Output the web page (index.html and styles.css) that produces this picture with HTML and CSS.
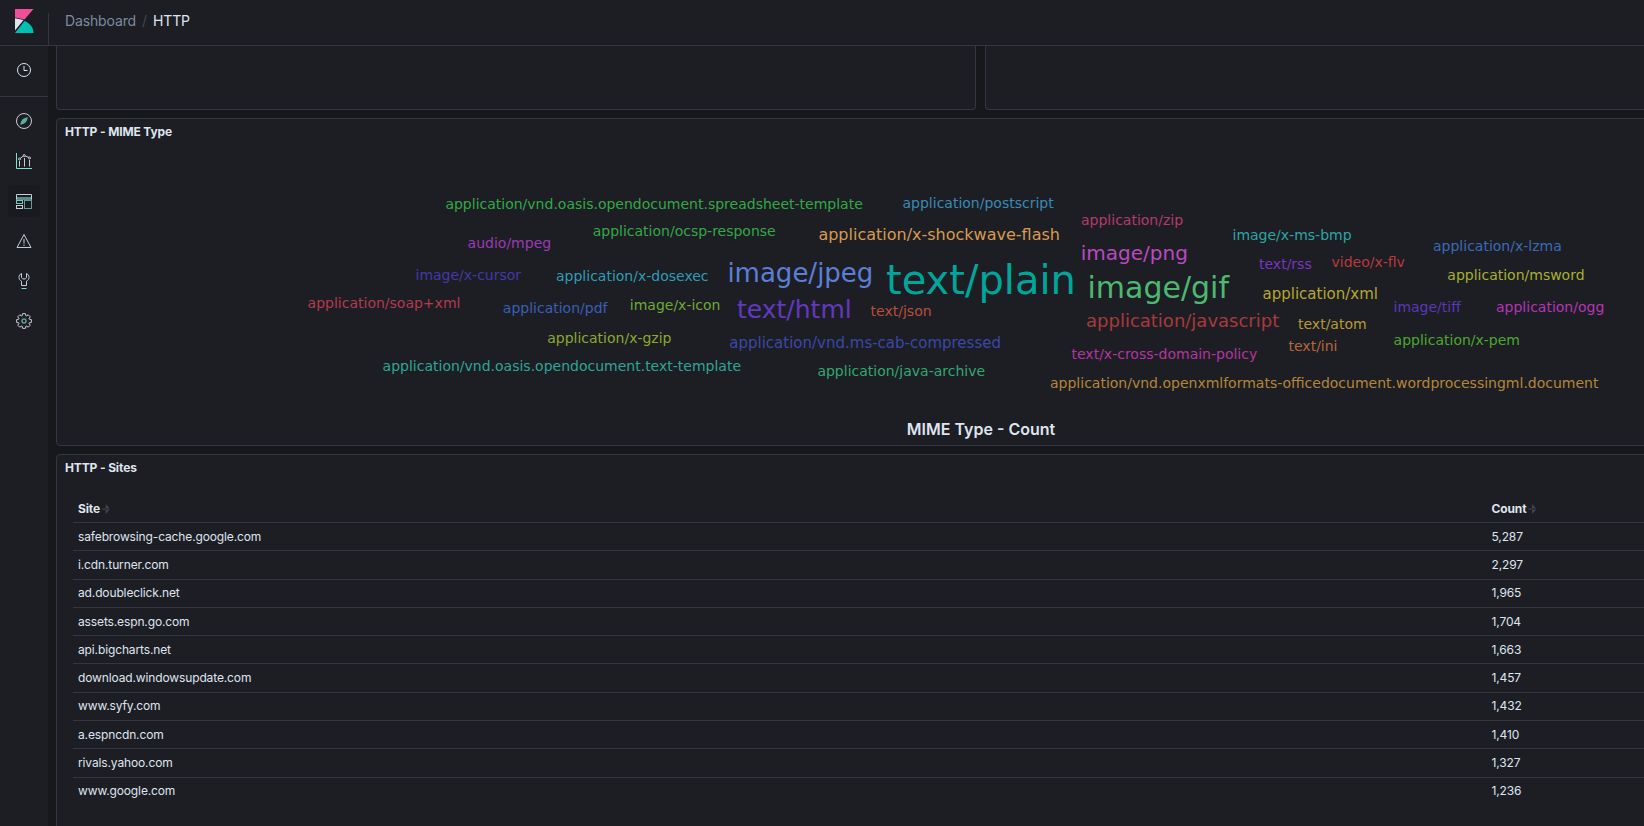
FILE: index.html
```html
<!DOCTYPE html>
<html lang="en">
<head>
    <meta charset="UTF-8">
    <meta name="viewport" content="width=device-width, initial-scale=1.0">
    <title>HTTP - Dashboard</title>
    <link rel="stylesheet" href="styles.css">
</head>
<body>
    <header class="top-bar">
        <div class="logo-box">
            <svg width="20" height="24" viewBox="0 0 20 24">
                <polygon points="0,0 18.500,0 9.500,10.500 0,8.500" fill="#f04e98"/>
                <polygon points="0,9.200 8.500,11 0,21.500" fill="#dfe5ef"/>
                <path d="M0 24 L9.500 12 C14.800 14 18.500 18.500 18.500 24 Z" fill="#00bfb3"/>
            </svg>
        </div>
        <nav class="crumbs">
            <span class="crumb">Dashboard</span>
            <span class="crumb-sep">/</span>
            <span class="crumb-last">HTTP</span>
        </nav>
    </header>

    <div class="layout">
        <aside class="side-nav">
            <div class="nav-group">
                <div class="nav-item">
                    <svg width="16" height="16" viewBox="0 0 16 16" fill="none" stroke="#dfe5ef">
                        <circle cx="8" cy="8" r="6.500"/>
                        <path d="M8 4v4.500h3.500"/>
                    </svg>
                </div>
            </div>
            <div class="nav-group nav-group-main">
                <div class="nav-item">
                    <svg width="16" height="16" viewBox="0 0 16 16" fill="none" stroke="#c9ced6">
                        <circle cx="8" cy="8" r="7.500"/>
                        <path d="M11.800 4.200C11.500 6.500 10.500 8.600 9.200 9.800 8 10.800 6 11.500 4.200 11.800 4.500 9.500 5.500 7.400 6.800 6.200 8 5.200 10 4.500 11.800 4.200Z" fill="#54b399" stroke="none"/>
                    </svg>
                </div>
                <div class="nav-item">
                    <svg width="16" height="16" viewBox="0 0 16 16" fill="none" stroke="#c9ced6">
                        <path d="M.5 0v15.500H16" stroke="#7de2d1"/>
                        <path d="M3.500 8v5.500M8.500 5v8.500M13.500 7v6.500"/>
                        <path d="M3.500 6 8 2.500l5 2"/>
                        <circle cx="3.500" cy="6" r="1" fill="#1d1e24"/>
                        <circle cx="8.200" cy="2.500" r="1" fill="#1d1e24"/>
                        <circle cx="13.500" cy="5" r="1" fill="#1d1e24"/>
                    </svg>
                </div>
                <div class="nav-item nav-item-active">
                    <svg width="16" height="17" viewBox="0 0 16 17" fill="none" stroke="#c9ced6">
                        <rect x="0" y="4" width="16" height="3" fill="#5b8a85" stroke="none"/>
                        <path d="M.5 6.500V1.500h15v5"/>
                        <rect x=".5" y="12.500" width="6" height="3"/>
                        <rect x=".5" y="7.500" width="6" height="3" stroke="#6fc9ba"/>
                        <rect x="8.500" y="7.500" width="7" height="8" stroke="#5f9e94"/>
                    </svg>
                </div>
                <div class="nav-item">
                    <svg width="16" height="16" viewBox="0 0 16 16" fill="none" stroke="#c9ced6">
                        <path d="M8 1.500 15 14.500H1Z"/>
                        <path d="M8 6v4.500M8 11.500v1.500"/>
                    </svg>
                </div>
                <div class="nav-item">
                    <svg width="16" height="16" viewBox="0 0 16 16" fill="none" stroke="#c9ced6">
                        <path d="M5.500.5C3.800 1.200 3 2.800 3 4.300c0 1.800 1 3.200 2.500 3.900v4.300h5V8.200C12 7.500 13 6.100 13 4.300c0-1.500-.8-3.100-2.500-3.800v4c0 .8-1 1.500-2.500 1.500s-2.500-.7-2.500-1.500Z"/>
                        <path d="M5.500 15.500h5" stroke="#7de2d1"/>
                    </svg>
                </div>
                <div class="nav-item">
                    <svg width="16" height="16" viewBox="0 0 16 16" fill="none" stroke="#c9ced6">
                        <polygon points="13.170,6.120 15.360,6.570 15.360,9.430 13.170,9.880 12.980,10.320 14.220,12.190 12.190,14.220 10.320,12.980 9.880,13.170 9.430,15.360 6.570,15.360 6.120,13.170 5.680,12.980 3.810,14.220 1.780,12.190 3.020,10.320 2.830,9.880 .64,9.430 .64,6.570 2.830,6.120 3.020,5.680 1.780,3.810 3.810,1.780 5.680,3.020 6.120,2.830 6.570,.64 9.430,.64 9.880,2.830 10.320,3.020 12.190,1.780 14.220,3.810 12.980,5.680"/>
                        <circle cx="8" cy="8" r="2" stroke="#5f9e94" stroke-width="1.500"/>
                    </svg>
                </div>
            </div>
        </aside>

        <main class="dashboard">
            <div class="panel-row">
                <section class="panel panel-cut"></section>
                <section class="panel panel-cut"></section>
            </div>

            <section class="panel panel-mime">
                <h2 class="panel-title">HTTP - MIME Type</h2>
                <svg class="cloud" width="1850" height="270" viewBox="56 150 1850 270">
                    <text x="445.400" y="209" font-size="14" fill="#33a846">application/vnd.oasis.opendocument.spreadsheet-template</text>
                    <text x="592.700" y="236" font-size="14" fill="#33a846">application/ocsp-response</text>
                    <text x="467.600" y="247.700" font-size="14" fill="#9b3bb5">audio/mpeg</text>
                    <text x="415.500" y="280" font-size="14" fill="#4339a8">image/x-cursor</text>
                    <text x="556" y="281" font-size="14" fill="#2f9cb5">application/x-dosexec</text>
                    <text x="727.400" y="281.700" font-size="26" fill="#5b7fd6">image/jpeg</text>
                    <text x="307.600" y="308.300" font-size="14" fill="#b53a4a">application/soap+xml</text>
                    <text x="502.800" y="313" font-size="14" fill="#3a5fb5">application/pdf</text>
                    <text x="629.800" y="310.300" font-size="14" fill="#6fa83a">image/x-icon</text>
                    <text x="737" y="317.700" font-size="25" fill="#6238c0">text/html</text>
                    <text x="547.200" y="343" font-size="14" fill="#8aa832">application/x-gzip</text>
                    <text x="729.300" y="347.700" font-size="15" fill="#3a48a8">application/vnd.ms-cab-compressed</text>
                    <text x="382.600" y="371" font-size="14" fill="#2ea596">application/vnd.oasis.opendocument.text-template</text>
                    <text x="817.400" y="375.700" font-size="14" fill="#30a870">application/java-archive</text>
                    <text x="902.500" y="208" font-size="14" fill="#3a8ab5">application/postscript</text>
                    <text x="818.400" y="240" font-size="16" fill="#d69a50">application/x-shockwave-flash</text>
                    <text x="1081" y="225" font-size="14" fill="#b53a6a">application/zip</text>
                    <text x="1232.500" y="240.300" font-size="14" fill="#2ea5a5">image/x-ms-bmp</text>
                    <text x="1433" y="251" font-size="14" fill="#3a6ab5">application/x-lzma</text>
                    <text x="1080.800" y="260" font-size="20" fill="#b84ac0">image/png</text>
                    <text x="1259" y="268.700" font-size="14" fill="#7a35c0">text/rss</text>
                    <text x="1331.500" y="267" font-size="14" fill="#b83a3a">video/x-flv</text>
                    <text x="1447.300" y="280" font-size="14" fill="#a8b030">application/msword</text>
                    <text x="886" y="294.300" font-size="40" fill="#00a69b">text/plain</text>
                    <text x="1087.500" y="298.300" font-size="30" fill="#4cb870">image/gif</text>
                    <text x="1262.500" y="299" font-size="15" fill="#b5a82e">application/xml</text>
                    <text x="1393.500" y="312.300" font-size="14" fill="#5a38b5">image/tiff</text>
                    <text x="1496" y="312.300" font-size="14" fill="#b535b5">application/ogg</text>
                    <text x="870.600" y="316" font-size="14" fill="#b5503a">text/json</text>
                    <text x="1086" y="326.700" font-size="18" fill="#a83a3a">application/javascript</text>
                    <text x="1298" y="328.700" font-size="14" fill="#b8993a">text/atom</text>
                    <text x="1393.600" y="345" font-size="14" fill="#4aa82e">application/x-pem</text>
                    <text x="1288.500" y="351.300" font-size="14" fill="#b5673a">text/ini</text>
                    <text x="1071.500" y="359" font-size="14" fill="#b535a0">text/x-cross-domain-policy</text>
                    <text x="1050" y="387.700" font-size="14" fill="#b5853a">application/vnd.openxmlformats-officedocument.wordprocessingml.document</text>
                </svg>
                <div class="cloud-label">MIME Type - Count</div>
            </section>

            <section class="panel panel-sites">
                <h2 class="panel-title">HTTP - Sites</h2>
                <table class="site-table">
                    <thead>
                        <tr>
                            <th class="col-site">Site <span class="sort-arrows"></span></th>
                            <th>Count <span class="sort-arrows"></span></th>
                        </tr>
                    </thead>
                    <tbody>
                        <tr><td>safebrowsing-cache.google.com</td><td>5,287</td></tr>
                        <tr><td>i.cdn.turner.com</td><td>2,297</td></tr>
                        <tr><td>ad.doubleclick.net</td><td>1,965</td></tr>
                        <tr><td>assets.espn.go.com</td><td>1,704</td></tr>
                        <tr><td>api.bigcharts.net</td><td>1,663</td></tr>
                        <tr><td>download.windowsupdate.com</td><td>1,457</td></tr>
                        <tr><td>www.syfy.com</td><td>1,432</td></tr>
                        <tr><td>a.espncdn.com</td><td>1,410</td></tr>
                        <tr><td>rivals.yahoo.com</td><td>1,327</td></tr>
                        <tr><td>www.google.com</td><td>1,236</td></tr>
                    </tbody>
                </table>
            </section>
        </main>
    </div>
</body>
</html>
```

FILE: styles.css
```css
html, body {
    height: 100%;
}
body {
    margin: 0;
    overflow: hidden;
    display: flex;
    flex-direction: column;
    background-color: #17181c;
    color: #dfe5ef;
    font-family: Inter, "Liberation Sans", sans-serif;
    letter-spacing: -0.13px;
}
.top-bar {
    display: flex;
    flex: none;
    height: 45px;
    background-color: #1d1e24;
    border-bottom: 1px solid #343741;
}
.logo-box {
    display: flex;
    width: 49px;
    box-sizing: border-box;
    margin: 13px 0 0;
    padding: 0 0 0 15px;
    border-right: 1px solid #343741;
}
.logo-box svg {
    margin-top: -4px;
}
.crumbs {
    display: flex;
    align-items: center;
    gap: 6px;
    padding: 0 0 4px 16px;
    font-size: 14px;
}
.crumb {
    color: #7c8aa0;
}
.crumb-sep {
    color: #424653;
}
.crumb-last {
    color: #dfe5ef;
}
.layout {
    display: flex;
    flex: 1;
    min-height: 0;
}
.side-nav {
    flex: none;
    width: 48px;
    background-color: #1d1e24;
}
.nav-group {
    padding: 4px 0 6px;
    border-bottom: 1px solid #343741;
}
.nav-group-main {
    border-bottom: none;
}
.nav-item {
    display: flex;
    align-items: center;
    justify-content: center;
    width: 32px;
    height: 40px;
    margin: 0 8px;
    box-sizing: border-box;
}
.nav-item-active {
    height: 32px;
    margin-top: 4px;
    margin-bottom: 4px;
    background-color: #191a1f;
    border-radius: 4px;
}
.dashboard {
    flex: none;
    display: flex;
    flex-direction: column;
    gap: 8px;
    width: 1850px;
    margin-left: 8px;
}
.panel-row {
    display: flex;
    gap: 9px;
}
.panel {
    flex: none;
    position: relative;
    box-sizing: border-box;
    background-color: #1d1e24;
    border: 1px solid #343741;
    border-radius: 4px;
}
.panel-cut {
    width: 920px;
    height: 64px;
    border-top: none;
    border-radius: 0 0 4px 4px;
}
.panel-title {
    margin: 0;
    padding: 5px 8px 0;
    font-size: 12px;
    line-height: 15px;
    font-weight: 700;
    color: #dfe5ef;
}
.panel-mime {
    height: 328px;
}
.cloud {
    display: block;
    margin: 11px 0 0 -1px;
    font-family: "DejaVu Sans", sans-serif;
    letter-spacing: 0;
}
.cloud-label {
    margin-top: -1px;
    text-align: center;
    font-size: 16px;
    line-height: 20px;
    font-weight: 600;
    letter-spacing: 0;
    color: #dfe5ef;
}
.panel-sites {
    height: 500px;
    padding-bottom: 16px;
}
.site-table {
    width: calc(100% - 32px);
    margin: 20px 0 0 16px;
    border-collapse: collapse;
    font-size: 12px;
    line-height: 18px;
}
.site-table th {
    height: 27px;
    padding: 0 5px;
    text-align: left;
    font-weight: 700;
    border-bottom: 1px solid #343741;
}
.site-table td {
    height: 27.300px;
    padding: 0 5px;
    border-bottom: 1px solid #343741;
}
.site-table tr:last-child td {
    border-bottom: none;
}
.col-site {
    width: 1403.500px;
}
.sort-arrows {
    display: inline-block;
    width: 8px;
    height: 10px;
    margin-left: -1px;
    vertical-align: -1.500px;
    background-color: #424653;
    clip-path: polygon(50% 0, 100% 44%, 0 44%, 0 56%, 100% 56%, 50% 100%);
}
```
